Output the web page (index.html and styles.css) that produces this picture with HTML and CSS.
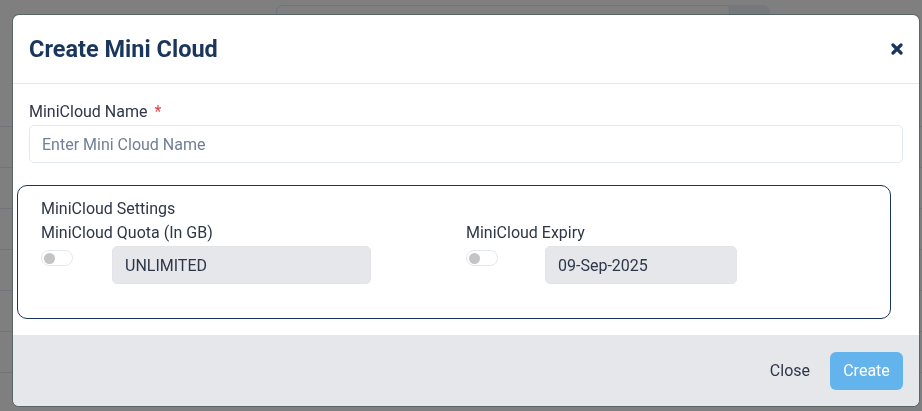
FILE: index.html
```html
<!DOCTYPE html>
<html lang="en">
<head>
    <meta charset="UTF-8">
    <meta name="viewport" content="width=device-width, initial-scale=1.0">
    <title>Create Mini Cloud</title>
    <link rel="stylesheet" href="styles.css">
</head>
<body>
    <!-- page behind the modal -->
    <div class="page">
        <div class="searchBar">
            <div class="searchInput"></div>
            <div class="searchButton"></div>
        </div>
        <div class="rows">
            <div class="row"></div>
            <div class="row"></div>
            <div class="row"></div>
            <div class="row"></div>
            <div class="row"></div>
            <div class="row"></div>
            <div class="row"></div>
        </div>
    </div>

    <div class="overlay">
        <div class="modal">
            <div class="modalHeader">
                <h2 class="modalTitle">Create Mini Cloud</h2>
                <button class="closeIcon" aria-label="Close">
                    <svg width="12" height="12" viewBox="0 0 12 12">
                        <path d="M2 2 L10 10 M10 2 L2 10" stroke="#1a365d" stroke-width="3.2" stroke-linecap="round"/>
                    </svg>
                </button>
            </div>

            <div class="modalBody">
                <label class="fieldLabel">MiniCloud Name <span class="required">*</span></label>
                <input class="textInput" type="text" placeholder="Enter Mini Cloud Name">

                <div class="settingsBox">
                    <div class="settingsTitle">MiniCloud Settings</div>
                    <div class="settingsGrid">
                        <div class="settingsCol">
                            <div class="colLabel">MiniCloud Quota (In GB)</div>
                            <div class="colRow">
                                <span class="toggle"><span class="knob"></span></span>
                                <div class="disabledInput quotaInput">UNLIMITED</div>
                            </div>
                        </div>
                        <div class="settingsCol">
                            <div class="colLabel">MiniCloud Expiry</div>
                            <div class="colRow">
                                <span class="toggle"><span class="knob"></span></span>
                                <div class="disabledInput expiryInput">09-Sep-2025</div>
                            </div>
                        </div>
                    </div>
                </div>
            </div>

            <div class="modalFooter">
                <button class="closeButton">Close</button>
                <button class="createButton">Create</button>
            </div>
        </div>
    </div>
</body>
</html>
```

FILE: styles.css
```css
*{
    box-sizing: border-box;
}
body{
    margin: 0px;
    padding: 0px;
    background-color: white;
    font-family: Roboto, "Liberation Sans", sans-serif;
    color: #2d3748;
    height: 411px;
    overflow: hidden;
}

/* page behind */
.page{
    padding-top: 5px;
}
.searchBar{
    display: flex;
    margin-left: 276px;
    width: 494px;
    height: 40px;
}
.searchInput{
    flex: 1;
    border: 1px solid #e2e8f0;
    border-radius: 6px 0px 0px 6px;
}
.searchButton{
    width: 40px;
    background-color: #edf2f7;
    border-radius: 0px 6px 6px 0px;
}
.rows{
    margin-top: 16px;
}
.row{
    height: 41px;
    border-bottom: 1px solid #e2e8f0;
}
.row:first-child{
    height: 66px;
}

.overlay{
    position: fixed;
    inset: 0px;
    background-color: rgba(0, 0, 0, 0.5);
}
.modal{
    position: absolute;
    left: 13px;
    top: 15px;
    width: 906px;
    height: 391px;
    background-color: white;
    border-radius: 6px;
    box-shadow: 0px 0px 0px 1px rgba(40, 70, 70, 0.45);
    overflow: hidden;
    display: flex;
    flex-direction: column;
}

.modalHeader{
    height: 69px;
    display: flex;
    align-items: center;
    justify-content: space-between;
    padding: 0px 16px;
    border-bottom: 1px solid #e2e8f0;
}
.modalTitle{
    margin: 0px;
    font-size: 23.5px;
    font-weight: 700;
    color: #1a365d;
}
.closeIcon{
    border: none;
    background: none;
    padding: 0px;
    width: 12px;
    height: 12px;
    display: flex;
}

.modalBody{
    padding: 16px 16px 0px 16px;
    flex: 1;
}
.fieldLabel{
    display: block;
    font-size: 16px;
    line-height: 24px;
    margin-bottom: 1px;
}
.required{
    color: #e53e3e;
    margin-left: 3px;
}
.textInput{
    display: block;
    width: 100%;
    height: 38px;
    border: 1px solid #e2e8f0;
    border-radius: 5px;
    padding: 0px 12px;
    font-family: Roboto, "Liberation Sans", sans-serif;
    font-size: 16px;
    color: #2d3748;
}
.textInput::placeholder{
    color: #718096;
}

.settingsBox{
    margin: 22px 12px 0px -12px;
    height: 134px;
    border: 1px solid #1a365d;
    border-radius: 10px;
    padding: 11px 23px 0px 23px;
}
.settingsTitle, .colLabel{
    font-size: 16px;
    line-height: 24px;
}
.settingsGrid{
    display: grid;
    grid-template-columns: 1fr 1fr;
    column-gap: 24px;
}
.colRow{
    display: flex;
    align-items: flex-start;
    margin-top: 1px;
}
.toggle{
    margin-top: 4px;
    width: 32px;
    height: 16px;
    border: 1px solid #e2e8f0;
    border-radius: 8px;
    background-color: white;
    display: flex;
    align-items: center;
    padding-left: 2px;
}
.knob{
    width: 11px;
    height: 11px;
    border-radius: 50%;
    background-color: #c4c4c4;
}
.disabledInput{
    height: 38px;
    display: flex;
    align-items: center;
    padding: 0px 12px;
    background-color: #e5e7eb;
    border: 1px solid #e2e4e8;
    border-radius: 5px;
    font-size: 16px;
    color: #2d3748;
}
.quotaInput{
    margin-left: 39px;
    width: 259px;
}
.expiryInput{
    margin-left: 47px;
    width: 192px;
}

.modalFooter{
    height: 71px;
    background-color: #e5e7eb;
    display: flex;
    align-items: center;
    justify-content: flex-end;
    padding: 0px 16px;
    gap: 20px;
}
.closeButton{
    border: none;
    background: none;
    font-family: Roboto, "Liberation Sans", sans-serif;
    font-size: 16px;
    color: #2d3748;
    padding: 0px;
}
.createButton{
    height: 38px;
    width: 73px;
    border: none;
    border-radius: 6px;
    background-color: #63b3ed;
    color: white;
    font-family: Roboto, "Liberation Sans", sans-serif;
    font-size: 16px;
}
```
